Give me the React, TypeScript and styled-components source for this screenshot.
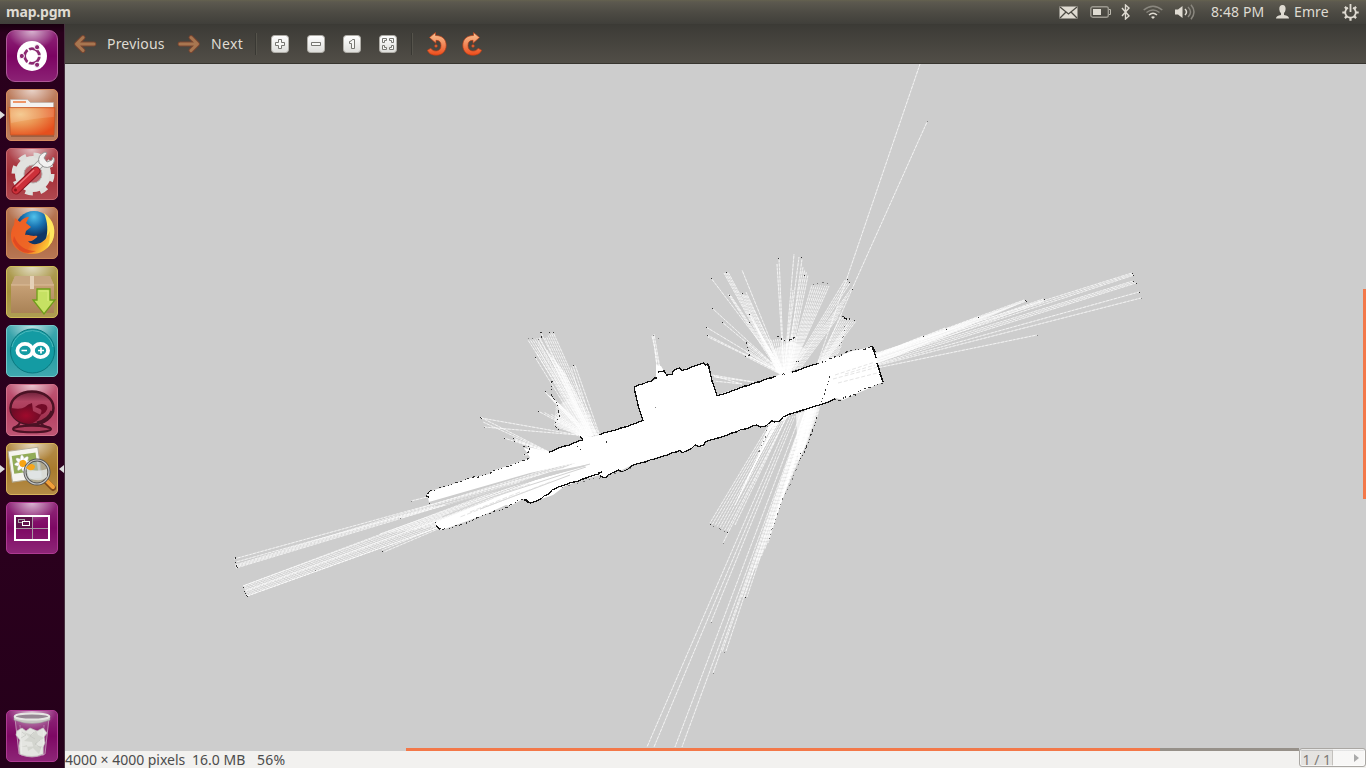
import React from "react";
import styled, { createGlobalStyle } from "styled-components";

const GlobalStyle = createGlobalStyle`
  * { box-sizing: border-box; }
  body { margin: 0; overflow: hidden; background: #cdcdcd; }
  body, button { font-family: "Noto Sans", "Open Sans", sans-serif; }
`;

const Desktop = styled.div`
  width: 1366px;
  height: 768px;
  display: flex;
  flex-direction: column;
`;

const TopPanel = styled.header`
  height: 24px;
  flex: none;
  display: flex;
  align-items: center;
  padding: 0 7px 0 6px;
  color: #dfdbd2;
  background: linear-gradient(#65624f 0, #5c594f 2px, #4c4a43 55%, #403f3a 100%);
`;

const WindowTitle = styled.h1`
  margin: 0;
  flex: 1;
  font-size: 14px;
  font-weight: 700;
  line-height: 24px;
  letter-spacing: -0.2px;
`;

const Indicator = styled.span<{ $gap: number }>`
  display: flex;
  margin-left: ${(p) => p.$gap}px;
`;

const PanelText = styled.span<{ $gap: number; $width: number; $spacing: number }>`
  width: ${(p) => p.$width}px;
  margin-left: ${(p) => p.$gap}px;
  font-size: 14px;
  line-height: 24px;
  letter-spacing: ${(p) => p.$spacing}px;
  white-space: nowrap;
`;

const Workspace = styled.div`
  flex: 1;
  min-height: 0;
  display: flex;
`;

const Launcher = styled.nav`
  width: 65px;
  flex: none;
  display: flex;
  flex-direction: column;
  align-items: center;
  gap: 7px;
  padding: 6px 1px 6px 0;
  border-right: 1px solid #47303f;
  background: linear-gradient(#18000f 0, #29001c 9px, #2c001e 60%, #25001a 100%);
`;

const Tile = styled.div<{ $color: string; $edge: string; $last?: boolean; $round?: number }>`
  position: relative;
  width: 52px;
  height: 52px;
  flex: none;
  margin-top: ${(p) => (p.$last ? "auto" : "0")};
  border-radius: ${(p) => p.$round ?? 5}px;
  border: 1px solid ${(p) => p.$edge};
  background: radial-gradient(ellipse 24px 19px at 50% 0, rgba(255, 255, 255, 0.65), rgba(255, 255, 255, 0)),
    linear-gradient(rgba(255, 255, 255, 0.14), rgba(255, 255, 255, 0) 50%, rgba(255, 255, 255, 0.12)), ${(p) => p.$color};
  svg { display: block; margin: -1px; }
`;

const Pip = styled.i<{ $right?: boolean }>`
  position: absolute;
  top: 21px;
  ${(p) => (p.$right ? "right: -7px;" : "left: -7px;")}
  border: solid transparent;
  border-width: 4px 0;
  ${(p) => (p.$right ? "border-right: 5px solid #ddd;" : "border-left: 5px solid #ddd;")}
`;

const Viewer = styled.main`
  flex: 1;
  min-width: 0;
  display: flex;
  flex-direction: column;
`;

const Toolbar = styled.div`
  height: 40px;
  flex: none;
  display: flex;
  align-items: center;
  padding: 0 0 1px 8px;
  color: #dfdbd2;
  border-top: 1px solid #3b3a35;
  border-bottom: 1px solid #37352f;
  background: linear-gradient(#3c3b36, #514e47);
`;

const ToolButton = styled.button<{ $width: number; $spacing?: number }>`
  width: ${(p) => p.$width}px;
  height: 36px;
  padding: 0;
  border: 0;
  display: flex;
  align-items: center;
  gap: 10px;
  background: none;
  color: inherit;
  font-size: 14px;
  letter-spacing: ${(p) => p.$spacing ?? 0}px;
  svg { flex: none; }
`;

const Divider = styled.span<{ $after: number }>`
  width: 2px;
  height: 22px;
  margin-right: ${(p) => p.$after}px;
  background: #393833;
  border-right: 1px solid #55534b;
`;

const Canvas = styled.section`
  position: relative;
  height: 687px;
  flex: none;
  background: #cdcdcd;
  svg { display: block; }
`;

const VerticalThumb = styled.div`
  position: absolute;
  right: 0;
  top: 225px;
  width: 3px;
  height: 210px;
  background: #f37849;
`;

const HorizontalBar = styled.div`
  position: absolute;
  left: 341px;
  bottom: 0;
  width: 893px;
  height: 3px;
  background: linear-gradient(90deg, #f37849 754px, #969089 754px);
`;

const StatusBar = styled.footer`
  position: relative;
  flex: 1;
  display: flex;
  color: #4c4c4c;
  background: #f2f1ef;
  font-size: 14px;
  line-height: 17px;
  white-space: pre;
`;

const StatusText = styled.span<{ $width: number; $spacing: number }>`
  width: ${(p) => p.$width}px;
  letter-spacing: ${(p) => p.$spacing}px;
`;

const PageCount = styled.span`
  position: absolute;
  right: 35px;
  bottom: 0;
  color: #77746f;
`;

const Stepper = styled.div`
  position: absolute;
  top: -3px;
  right: 0;
  width: 67px;
  height: 19px;
  display: flex;
  align-items: center;
  justify-content: flex-end;
  padding-right: 6px;
  border: 1px solid #aaa7a3;
  border-radius: 3px;
  background: linear-gradient(90deg, rgba(160, 155, 150, 0.16) 32px, #c4c1bd 32px, #c4c1bd 33px, rgba(255, 255, 255, 0.45) 33px);
  box-shadow: inset 0 0 0 1px rgba(255, 255, 255, 0.6);
`;

type Point = [number, number];

const toPoints = (list: Point[]) => list.map((p) => p.join(",")).join(" ");

/* Rays swept evenly from one edge of a scan sector to the other. */
const sweep = (a: Point, b: Point, from: Point, to: Point, count: number) =>
  Array.from({ length: count }, (_, i) => {
    const t = count === 1 ? 0 : i / (count - 1);
    const mix = (p: Point, q: Point) => `${(p[0] + (q[0] - p[0]) * t).toFixed(1)} ${(p[1] + (q[1] - p[1]) * t).toFixed(1)}`;
    return `M${mix(from, to)}L${mix(a, b)}`;
  }).join("");

const fan = (origin: Point, ends: Point[]) => ends.map((e) => `M${origin.join(" ")}L${e.join(" ")}`).join("");

/* Breaks a straight wall into the small steps of an occupancy grid. */
const roughen = (line: Point[], amount: number): Point[] => {
  const out: Point[] = [];
  line.forEach((p, i) => {
    out.push(p);
    const q = line[i + 1];
    if (!q) return;
    const steps = Math.floor(Math.hypot(q[0] - p[0], q[1] - p[1]) / 4);
    for (let s = 1; s < steps; s++) {
      const t = s / steps;
      const x = p[0] + (q[0] - p[0]) * t;
      const y = p[1] + (q[1] - p[1]) * t;
      out.push([x, y + Math.sin(x * 12.9 + y * 4.1) * amount]);
    }
  });
  return out;
};

const floor: Point[] = [
  [427, 494], [431, 491], [450, 485], [470, 478], [489, 474], [492, 471], [510, 465], [530, 458], [531, 452],
  [527, 447], [533, 448], [549, 452], [583, 440], [578, 434], [592, 437], [599, 435], [643, 420], [638, 404],
  [634, 390], [635, 386], [655, 380], [657, 374], [660, 374], [667, 375], [672, 374], [673, 370], [675, 369],
  [680, 368], [682, 370], [703, 363], [708, 366], [717, 395], [776, 376], [783, 373], [792, 372], [817, 364],
  [829, 358], [839, 356], [852, 351], [862, 349], [872, 346], [876, 358], [883, 382], [872, 387], [858, 393],
  [843, 400], [835, 398], [820, 405], [790, 415], [783, 421], [775, 420], [770, 424], [760, 427], [757, 425],
  [705, 442], [703, 447], [697, 445], [693, 447], [683, 452], [678, 451], [632, 465], [620, 471], [617, 470],
  [605, 478], [600, 475], [585, 479], [565, 486], [553, 495], [530, 503], [523, 499], [510, 506], [506, 505],
  [484, 515], [470, 520], [442, 530], [436, 527], [436, 522], [490, 500], [540, 478], [575, 463], [530, 473],
  [429, 502],
];

const walls: Point[][] = [
  [[549, 452], [565, 446], [583, 440], [580, 436]],
  [[599, 435], [621, 428], [643, 420.500], [638, 405], [634.500, 390], [634.500, 387], [647, 382], [652, 381], [654, 378], [657, 378]],
  [[666, 375], [672, 374.500], [673, 371], [676, 369], [680, 368], [682, 370.500], [692, 367], [704, 363], [705.500, 365], [708, 364], [712, 381], [717, 395.500], [740, 388], [776, 376]],
  [[792, 372], [804, 368], [817, 364]],
  [[870, 347], [872, 346], [876, 358]],
  [[877, 363], [879, 369], [883, 382]],
  [[835, 399], [820, 405], [790, 414], [783, 417], [780, 421], [774, 422], [772, 420.500], [768, 424], [766, 426], [760, 427], [757, 425], [732, 433], [705, 442], [704, 445], [699, 446.500], [695, 445], [691, 449], [684, 452], [682, 453], [680, 450.500], [655, 459], [632, 465.500], [628, 469], [622, 472], [619, 470], [612, 473], [605, 478], [600, 476]],
  [[602, 471], [599, 474], [589, 477], [583, 479], [565, 485], [552, 490], [549, 494], [544, 496], [541, 499], [530, 503], [527, 500], [524, 500]],
];

const brokenWalls: Point[][] = [
  [[427, 494], [431, 491], [450, 485], [470, 478], [490, 474], [492, 471], [530, 458]],
  [[817, 364], [829, 359], [840, 356], [852, 350], [862, 350], [872, 346]],
  [[883, 383], [872, 387], [859, 391], [857, 395], [844, 397], [841, 401], [835, 399]],
  [[523, 499], [510, 505], [508, 507], [484, 515], [460, 525], [442, 530], [437, 527], [435, 522]],
  [[830, 376], [824, 395], [819, 406]],
  [[817, 417], [812, 432], [807, 446], [800, 460]],
  [[542, 338], [541, 332]],
  [[552, 381], [551, 394], [556, 402], [560, 416], [554, 425], [559, 430]],
  [[842, 316], [846, 319], [853, 319], [855, 321]],
  [[746, 342], [750, 355], [745, 357]],
  [[777, 336], [786, 341], [795, 337]],
  [[523, 447], [528, 446], [531, 451], [524, 455]],
  [[235, 557], [237, 567]],
];

const sparseEdges: Point[][] = [
  [[800, 460], [790, 485], [782, 500], [768, 542]],
  [[768, 426], [765, 439], [758, 454]],
  [[710, 524], [718, 528], [727, 532]],
  [[845, 326], [844, 334], [839, 348]],
  [[813, 285], [822, 282], [827, 282], [829, 286]],
  [[528, 338], [539, 339]],
  [[558, 488], [600, 478], [632, 468]],
];

const rays = [
  sweep([647, 747], [654, 747], [790, 417], [793, 416], 2),
  sweep([675, 747], [682, 747], [801, 413], [805, 412], 2),
  fan([795, 416], [[711, 622]]),
  fan([806, 410], [[713, 673], [722, 652], [726, 651]]),
  fan([786, 418], [[723, 543], [735, 525]]),
  sweep([710, 523], [727, 531], [770, 423], [786, 418], 8),
  sweep([758, 455], [768, 428], [770, 423], [778, 421], 12),
  sweep([735, 505], [756, 460], [776, 420], [780, 420], 9),
  sweep([742, 597], [747, 597], [806, 410], [809, 410], 3),
  sweep([752, 575], [768, 543], [806, 410], [810, 409], 6),
  sweep([768, 540], [784, 494], [808, 409], [812, 408], 10),
  sweep([784, 494], [803, 450], [809, 408], [815, 407], 13),
  sweep([803, 450], [817, 417], [811, 408], [820, 405], 9),
  "M817 365L847 278L920 64M820 363L852 289L927 122",
  fan([784, 374], [
    [711, 278], [712, 308], [722, 322], [706, 327], [707, 335], [708, 337], [742, 270], [777, 264],
    [779, 258], [794, 254], [793, 290], [746, 292],
  ]),
  sweep([724, 273], [728, 272], [779, 373], [782, 374], 4),
  sweep([728, 294], [731, 296], [780, 374], [783, 374], 3),
  sweep([741, 293], [746, 295], [780, 373], [785, 373], 4),
  sweep([745, 356], [748, 343], [780, 374], [784, 374], 7),
  sweep([750, 315], [768, 347], [778, 373], [785, 373], 8),
  sweep([769, 340], [797, 337], [780, 373], [790, 373], 14),
  sweep([799, 257], [802, 259], [784, 373], [787, 373], 2),
  sweep([803, 267], [808, 275], [785, 372], [788, 372], 4),
  sweep([812, 285], [829, 286], [786, 373], [791, 371], 9),
  sweep([845, 280], [850, 283], [790, 371], [794, 370], 4),
  sweep([851, 289], [838, 317], [793, 369], [800, 369], 6),
  sweep([841, 317], [856, 321], [816, 366], [825, 362], 9),
  sweep([848, 324], [840, 350], [820, 363], [835, 357], 8),
  sweep([528, 340], [539, 338], [588, 434], [594, 437], 6),
  sweep([535, 357], [541, 333], [583, 435], [593, 436], 6),
  sweep([545, 338], [553, 332], [589, 434], [599, 435], 6),
  sweep([547, 350], [564, 372], [588, 435], [598, 435], 9),
  sweep([571, 367], [575, 365], [592, 436], [600, 436], 3),
  sweep([545, 392], [558, 403], [585, 435], [593, 436], 9),
  sweep([538, 411], [558, 416], [581, 434], [591, 437], 4),
  sweep([554, 426], [556, 405], [580, 435], [592, 437], 13),
  fan([578, 435], [[481, 418], [484, 427]]),
  fan([551, 453], [[480, 417], [483, 422], [504, 438], [513, 438], [515, 440], [516, 441], [524, 449], [523, 455]]),
  fan([661, 374], [[652, 336], [654, 334]]),
  fan([658, 374], [[653, 335], [655, 350]]),
  fan([754, 382], [[712, 375], [714, 377]]),
  fan([742, 384], [[714, 381], [714, 376]]),
  sweep([234, 559], [236, 562], [560, 469], [575, 468], 2),
  sweep([235, 565], [236, 568], [575, 461], [585, 463], 4),
  sweep([243, 586], [247, 596], [548, 474], [562, 483], 8),
  sweep([243, 586], [247, 596], [520, 482], [562, 483], 3),
  fan([520, 494], [[382, 550], [384, 552]]),
  fan([500, 479], [[411, 501]]),
  fan([535, 479], [[400, 518]]),
  sweep([436, 522], [440, 530], [560, 478], [540, 490], 9),
  sweep([380, 534], [440, 526], [560, 470], [540, 490], 8),
  sweep([1132, 273], [1134, 275], [835, 366], [838, 372], 3),
  sweep([1133, 281], [1136, 283], [832, 374], [836, 377], 3),
  fan([833, 377], [[1139, 292], [1141, 298], [1037, 335]]),
  sweep([1024, 300], [1026, 301], [846, 365], [850, 367], 3),
  sweep([1043, 299], [1044, 301], [845, 369], [848, 373], 3),
  fan([850, 366], [[923, 336], [945, 328], [978, 317], [960, 326]]),
].join("");

const hitPoints: Point[] = [
  [711, 278], [726, 272], [712, 308], [722, 322], [706, 327], [707, 335], [749, 314], [749, 322], [729, 295], [742, 293],
  [778, 258], [801, 257], [804, 275], [847, 279], [849, 282], [852, 289], [1132, 273], [1133, 275],
  [1133, 281], [1136, 283], [1139, 292], [1025, 300], [1026, 301], [1044, 299],
  [923, 336], [978, 317], [946, 329], [710, 524], [727, 532], [745, 597],
  [480, 417], [481, 418], [504, 438], [513, 438], [514, 441], [573, 365], [540, 332], [549, 332], [553, 332],
  [535, 357], [545, 391], [538, 411], [235, 557], [236, 566], [237, 567],
  [243, 587], [244, 591], [245, 593], [246, 595], [247, 596], [382, 551],
  [783, 373], [784, 374], [782, 374], [796, 361], [798, 361], [580, 449], [606, 441], [606, 442], [577, 446],
  [429, 503], [426, 495], [439, 529], [440, 528], [800, 453], [812, 431], [806, 445],
];

const faintPoints: Point[] = [
  [927, 121], [1141, 298], [1037, 335], [723, 543], [713, 673], [724, 652], [484, 427], [528, 338], [653, 335],
  [658, 338], [411, 501], [400, 518], [315, 570], [655, 407], [711, 622],
];

const ScanMap = () => (
  <svg width="1301" height="687" viewBox="65 64 1301 687">
    <path d={rays} stroke="#fff" strokeWidth="0.8" strokeOpacity="0.5" fill="none" />
    <path d={rays} stroke="#fff" strokeWidth="0.85" strokeOpacity="0.7" strokeDasharray="2 1.6 3 1.4" fill="none" />
    <polygon points="559,405 572,397 598,435 580,437 556,425" fill="#fff" opacity=".4" />
    <polygon points="551,368 562,368 590,433 565,412" fill="#fff" opacity=".2" />
    <polygon points="773,350 792,341 806,349 789,373 779,373" fill="#fff" opacity=".5" />
    <polygon points="796,414 818,407 807,443 798,462" fill="#fff" opacity=".7" />
    <polygon points="850,363 912,341 946,329 1026,301 900,355 845,376" fill="#fff" opacity=".7" />
    <polygon points="524,448 532,450 551,452 531,459" fill="#fff" />
    <polygon points="656,365 661,366 667,376 656,381" fill="#fff" />
    <polygon points={toPoints(floor)} fill="#fff" />
    <path d="M590 464L445 505M585 466L435 506M586 467L490 498L442 517M570 475L480 509" stroke="#cdcdcd" strokeWidth="0.9" fill="none" />
    <path d="M550 482L460 517M530 484L450 512M520 492L470 512" stroke="#ddd" strokeWidth=".8" strokeDasharray="5 2" fill="none" />
    <path d="M590 464L470 499L550 472Z" fill="#d0d0d0" />
    <path d="M835 375L875 362M833 379L878 367M838 383L881 372M845 374L875 365" stroke="#ddd" strokeWidth=".8" strokeDasharray="4 2" fill="none" />
    <path d="M792 416L760 490M789 417L757 485M794 417L776 458" stroke="#cdcdcd" strokeWidth=".9" />
    <g fill="none" stroke="#111" strokeLinejoin="bevel" shapeRendering="crispEdges">
      {walls.map((w, i) => (
        <polyline key={i} points={toPoints(roughen(w, 0.5))} strokeWidth="1.3" />
      ))}
      {brokenWalls.map((w, i) => (
        <polyline key={i} points={toPoints(roughen(w, 0.8))} stroke="#333" strokeWidth="1.1" strokeDasharray="2 3 1 2 1 4 3 2" />
      ))}
      {sparseEdges.map((w, i) => (
        <polyline key={i} points={toPoints(roughen(w, 0.7))} stroke="#777" strokeWidth="1" strokeDasharray="1 3 1 5 2 4" />
      ))}
    </g>
    <path d="M427 494l4-4M426 496l3 1M525 499l3 3 3 1M598 473l4-1M436 526l4 3M873 347l2 5M880 374l3 8M658 372l6-1 2 3M710 368l-3-4M844 318l3 1" stroke="#111" strokeWidth="1.4" fill="none" shapeRendering="crispEdges" />
    <g fill="#333" shapeRendering="crispEdges">
      {hitPoints.map(([x, y], i) => (
        <rect key={i} x={x} y={y} width="1" height="1" />
      ))}
    </g>
    <g fill="#888" shapeRendering="crispEdges">
      {faintPoints.map(([x, y], i) => (
        <rect key={i} x={x} y={y} width="1" height="1" />
      ))}
    </g>
  </svg>
);

const UbuntuArt = () => (
  <svg width="52" height="52">
    <circle cx="26" cy="26" r="15" fill="#fff" />
    <circle cx="26" cy="26" r="7.4" fill="none" stroke="#8c2a72" strokeWidth="2.8" />
    <path d="M26 26L37 26M26 26L20.5 16.5M26 26L20.5 35.5" stroke="#fff" strokeWidth="1.6" />
    <circle cx="26" cy="26" r="5.3" fill="#fff" />
    <g fill="#8c2a72" stroke="#fff" strokeWidth="1">
      <circle cx="15.8" cy="26" r="2.6" />
      <circle cx="31.1" cy="17.2" r="2.6" />
      <circle cx="31.1" cy="34.8" r="2.6" />
    </g>
  </svg>
);

const FilesArt = () => (
  <svg width="52" height="52">
    <defs>
      <radialGradient id="folder" cx=".25" cy=".25" r="1">
        <stop offset="0" stopColor="#f3c382" /><stop offset=".4" stopColor="#eb9351" /><stop offset=".85" stopColor="#e64f1d" />
      </radialGradient>
    </defs>
    <path d="M4.500 10.500h17l3 3h23v8h-43z" fill="#f4f2f0" stroke="#b5aca6" strokeWidth=".6" />
    <path d="M7 12h13v2H7z" fill="#ee9668" />
    <rect x="5" y="44" width="43" height="4" fill="#6e3a21" opacity=".4" />
    <path d="M3 18.500h46l-1 27.500H4.500z" fill="url(#folder)" stroke="#c85726" strokeWidth=".8" />
    <path d="M4.500 19.500h43.500l-.3 8.500Q30 29 5 34z" fill="#fff" opacity=".14" />
  </svg>
);

const SettingsArt = () => (
  <svg width="52" height="52">
    <circle cx="27" cy="26" r="13.500" fill="none" stroke="#e2e2df" strokeWidth="9" />
    <circle cx="27" cy="26" r="19" fill="none" stroke="#dededb" strokeWidth="5" strokeDasharray="7.460 7.460" />
    <circle cx="27" cy="26" r="9" fill="#bd5f65" stroke="#b4b2b0" />
    <path d="M28 22L38 12" stroke="#8e8e8e" strokeWidth="8" />
    <path d="M28 22L38 12" stroke="#ededec" strokeWidth="6.500" />
    <path d="M33 15q-2-8 6-11l2 1-3 5 3 4 5-2 1-3q2 1 1 5-3 7-10 5z" fill="#f2f2f1" stroke="#909090" strokeWidth=".9" />
    <path d="M30 23L10 42" stroke="#8c1520" strokeWidth="9" strokeLinecap="round" />
    <path d="M30 23L10 42" stroke="#cc3039" strokeWidth="7" strokeLinecap="round" />
    <path d="M28 22L10 39" stroke="#ef7378" strokeWidth="1.500" />
    <circle cx="9.500" cy="42" r="1.500" fill="#8b151d" />
  </svg>
);

const FirefoxArt = () => (
  <svg width="52" height="52">
    <defs>
      <radialGradient id="globe" cx=".5" cy=".15"><stop offset="0" stopColor="#52c2eb" /><stop offset=".55" stopColor="#1872b1" /><stop offset="1" stopColor="#103666" /></radialGradient>
      <linearGradient id="fox" x1="0" y1="0" x2="1" y2=".5"><stop offset="0" stopColor="#ee5b25" /><stop offset=".65" stopColor="#ee6825" /><stop offset="1" stopColor="#ffcc35" /></linearGradient>
    </defs>
    <circle cx="28" cy="23" r="19" fill="url(#globe)" />
    <path d="M40 8c7 6 10 15 7 24-5 14-20 18-31 13C5 41 2 28 8 18l1-7 5 4q4-5 9-5l-3 6 5 4-5 4-1 4c3-1 6 1 9 1 4-1 4 1 2 2-3 2-4 4-8 3 3 4 9 4 14 1 9-5 7-17 4-27z" fill="url(#fox)" />
    <path d="M38 6c10 7 13 18 8 29l-5 6c4-8 2-12 3-17l-4 8c2-7 2-17-2-26z" fill="#ffe65f" />
    <path d="M8 29q6 15 22 15-15 7-23-10z" fill="#da3c20" opacity=".65" />
  </svg>
);

const PackageArt = () => (
  <svg width="52" height="52">
    <defs><linearGradient id="box" x1="0" y1="0" x2="0" y2="1"><stop offset="0" stopColor="#d0aa80" /><stop offset="1" stopColor="#a98256" /></linearGradient></defs>
    <path d="M9 10h35l4 10v27H5V20z" fill="url(#box)" />
    <path d="M9 10h35l4 9H5z" fill="#c7a681" /><path d="M5 19h43" stroke="#dcbd98" />
    <path d="M24 10h4v13h-4z" fill="#e5d1b7" />
    <path d="M31 23h13v11h5L38 48 27 34h4z" fill="#c6e163" stroke="#6f9d1a" strokeWidth="1.300" />
    <path d="M33 25h9v10" fill="none" stroke="#dced80" />
  </svg>
);

const ArduinoArt = () => (
  <svg width="52" height="52">
    <circle cx="26.500" cy="26" r="22" fill="#149ba3" stroke="#08777e" />
    <path d="M6 22A21 21 0 0 1 47 22" fill="none" stroke="#4db8bb" />
    <g fill="none" stroke="#fff" strokeWidth="3.800">
      <ellipse cx="19" cy="25.500" rx="7.600" ry="6.600" />
      <ellipse cx="34.500" cy="25.500" rx="7.600" ry="6.600" />
    </g>
    <path d="M15.500 25.500h5.500M32 25.500h6M35 22.500v6" stroke="#fff" strokeWidth="1.700" />
  </svg>
);

const OrbArt = () => (
  <svg width="52" height="52">
    <defs>
      <linearGradient id="orb" x1="0" y1="0" x2="0" y2="1"><stop offset="0" stopColor="#6c2038" /><stop offset=".3" stopColor="#b24563" /><stop offset="1" stopColor="#9c2b49" /></linearGradient>
      <radialGradient id="core" cx=".5" cy=".6"><stop offset="0" stopColor="#a00a2c" /><stop offset="1" stopColor="#6e0b26" /></radialGradient>
    </defs>
    <ellipse cx="26" cy="45" rx="19" ry="3.300" fill="#a93b59" stroke="#4b1224" strokeWidth="2" />
    <path d="M14 38q-1 4-7 6M35 39q2 4 10 5" stroke="#4b1224" strokeWidth="2" fill="none" />
    <ellipse cx="26" cy="24" rx="21.500" ry="16.500" fill="url(#orb)" stroke="#4b1224" strokeWidth="2.500" />
    <path d="M5 24q10 2 14-1 3-3 7-4l1 8 8 4q-4 8-12 9Q5 38 5 24z" fill="url(#core)" />
    <path d="M29 23q5-5 11-2 4 4-3 9l-3 1q3-5 0-6-2-1-5-2z" fill="#720b27" />
    <path d="M46 27q-3 9-15 12" fill="none" stroke="#4b1224" strokeWidth="3" />
  </svg>
);

const ImageViewerArt = () => (
  <svg width="52" height="52">
    <g transform="rotate(-8 20 21)">
      <rect x="4" y="6" width="30" height="31" fill="#f5f4ef" stroke="#b3ab95" />
      <rect x="7" y="11" width="24" height="18" fill="#92ac57" />
      {[0, 45, 90, 135].map((a) => <ellipse key={a} cx="17" cy="20" rx="8.500" ry="2.500" fill="#fff" stroke="#bbb" strokeWidth=".4" transform={`rotate(${a} 17 20)`} />)}
      <circle cx="17" cy="20" r="3.500" fill="#f8a414" />
    </g>
    <path d="M40 38l7 7" stroke="#7e4919" strokeWidth="6" strokeLinecap="round" /><path d="M41 38l6 6" stroke="#f1a03a" strokeWidth="4" strokeLinecap="round" />
    <circle cx="31" cy="29" r="12" fill="#b2b9b3" fillOpacity=".7" stroke="#555" strokeWidth="3" />
    <circle cx="31" cy="29" r="12" fill="none" stroke="#c8c8c6" strokeWidth="1.200" />
    <path d="M20 25q10 5 21 1v8q-7 6-18 1z" fill="#e8ecee" opacity=".75" /><path d="M20 25q5-7 9-2 0 5-6 4z" fill="#f5a51c" />
  </svg>
);

const WorkspacesArt = () => (
  <svg width="52" height="52">
    <path d="M10 15h16v12H10z" fill="#5c1149" />
    <path d="M26.500 15v22M9 26.500h34" stroke="#a797a3" />
    <rect x="9" y="14" width="34" height="24" fill="none" stroke="#fff" strokeWidth="2" />
    <rect x="12.500" y="17.500" width="6" height="3" fill="none" stroke="#aaa" />
    <rect x="16.500" y="19.500" width="7" height="4" fill="#63134e" stroke="#fff" />
  </svg>
);

const TrashArt = () => (
  <svg width="52" height="52">
    <path d="M9 8l4 36q13 6 26 0l4-36z" fill="#ddd" fillOpacity=".18" stroke="#bd8ab0" />
    <g fill="#e4e5e1" stroke="#c3c5c0" strokeWidth=".7">
      <path d="M11 21l5-3 4 3 4-3 7 3 6-3 4 5-3 4 1 6-2 4v7q-11 5-23 0l-1-8 1-6-4-5z" />
      <path d="M18 22l5 5-5 4 8 1 2 7 4-8 7-3-7-3-2-5-4 5zM15 37l6-2 1 6 5-3 6 6 3-8" fill="#d3d5cf" stroke="none" />
      <path d="M16 22l4 3-5 3M28 22l-4 4 5 3M34 30l-5 4 6 4" fill="none" />
    </g>
    <path d="M14 15l2 31M38 15l-1 31" stroke="#fff" opacity=".3" />
    <path d="M8 6v4q18 7 36 0V6q-16 6-36 0z" fill="#c6c6c2" stroke="#999" strokeWidth=".5" />
    <ellipse cx="26" cy="6.500" rx="17.200" ry="3" fill="#968793" stroke="#e6e6e3" strokeWidth="2" />
  </svg>
);

const NavArrow = ({ next }: { next?: boolean }) => (
  <svg width="24" height="20" viewBox="0 0 24 20">
    <g transform={next ? "translate(24 0) scale(-1 1)" : undefined} fill="none" strokeLinecap="round" strokeLinejoin="round">
      <path d="M10 3.500L3.500 10l6.500 6.500M4 10h17" stroke="#7a4630" strokeWidth="4.800" />
      <path d="M10 3.500L3.500 10l6.500 6.500M4 10h17" stroke="#a87650" strokeWidth="3" />
    </g>
  </svg>
);

const ZoomGlyph = ({ kind }: { kind: "in" | "out" | "one" | "fit" }) => (
  <svg width="18" height="18">
    <defs><linearGradient id={`key-${kind}`} x1="0" y1="0" x2="0" y2="1"><stop offset="0" stopColor="#fff" /><stop offset="1" stopColor="#ddddda" /></linearGradient></defs>
    <rect x=".5" y=".5" width="17" height="17" rx="3" fill={`url(#key-${kind})`} stroke="#b0aea8" />
    <g fill="#f7f7f5" stroke="#777772">
      {kind === "in" && <path d="M7.500 4.500h3v3h3v3h-3v3h-3v-3h-3v-3h3z" />}
      {kind === "out" && <path d="M4.500 7.500h9v3h-9z" />}
      {kind === "one" && <path d="M9.500 4.500h2v9h-3v-5h-2v-2q2 0 3-2z" />}
      {kind === "fit" && <path d="M3.500 3.500h4v2h-2v2h-2zM10.500 3.500h4v4h-2v-2h-2zM3.500 10.500h2v2h2v2h-4zM12.500 10.500h2v4h-4v-2h2z" />}
    </g>
  </svg>
);

const RotateGlyph = ({ right }: { right?: boolean }) => (
  <svg width="20" height="24" viewBox="0 0 20 24">
    <defs><linearGradient id={right ? "turn-r" : "turn-l"} x1="0" y1="0" x2="0" y2="1"><stop offset="0" stopColor="#f9c393" /><stop offset=".5" stopColor="#f28b5c" /><stop offset="1" stopColor="#ef4b19" /></linearGradient></defs>
    <g transform={right ? "translate(20 0) scale(-1 1)" : undefined} stroke="#b83e17" strokeWidth=".7">
      <path d="M2.500 5.500L8.500.5v3c7 0 10.700 4 10.700 9.800 0 6-4.200 10-9.700 10-5 0-8-2-9.200-5l3.500-2c1.500 2 3 2.700 5.200 2.700 3.300 0 5-2.300 5-5.500 0-3.500-1.700-5.200-5-5.200v3z" fill={`url(#${right ? "turn-r" : "turn-l"})`} />
      <circle cx="9" cy="14" r="1.300" fill="#f37441" />
    </g>
  </svg>
);

const MailIcon = () => (
  <svg width="19" height="13"><path d="M.5.500h18v12H.5z" fill="#dfdbd2" /><path d="M1 1l8.500 7L18 1M1 12l6-6M18 12l-6-6" fill="none" stroke="#4c4a43" strokeWidth="1.300" /></svg>
);
const BatteryIcon = () => (
  <svg width="21" height="12"><rect x=".8" y=".8" width="17.500" height="10.400" rx="2" fill="none" stroke="#9b988f" strokeWidth="1.400" /><path d="M19 3.500h1.500v5H19" fill="none" stroke="#bbb8ae" /><path d="M3 3h8v6H3z" fill="#dfdbd2" /></svg>
);
const BluetoothIcon = () => (
  <svg width="10" height="16"><path d="M1 4l7 8-3.500 3V1L8 4l-7 8" fill="none" stroke="#dfdbd2" strokeWidth="1.400" /></svg>
);
const WifiIcon = () => (
  <svg width="20" height="14" fill="none" strokeWidth="1.500"><path d="M.7 5Q10-2.500 19.300 5M3.500 7.500q6.500-5 13 0" stroke="#8a877f" /><path d="M6 10q4-3.500 8 0" stroke="#dfdbd2" /><path d="M8 12q2-1.500 4 0l-2 2z" fill="#dfdbd2" /></svg>
);
const VolumeIcon = () => (
  <svg width="20" height="16"><path d="M0 5.500h3L7.500 2v12L3 10.500H0z" fill="#dfdbd2" /><path d="M10 5q3 3 0 6" fill="none" stroke="#dfdbd2" strokeWidth="1.500" /><path d="M13 3q5 5 0 10M16 .800q6 7.200 0 14.400" fill="none" stroke="#8a877f" strokeWidth="1.500" /></svg>
);
const UserIcon = () => (
  <svg width="13" height="14"><path d="M6.500 0C9 0 10 2 9.500 5q-.3 2-1.500 3v2q5 .5 5 3.500H0Q0 10.500 5 10V8Q3.500 7 3.300 4.500 3 0 6.500 0z" fill="#dfdbd2" /></svg>
);
const GearIcon = () => (
  <svg width="17" height="17" fill="none" stroke="#dfdbd2"><path d="M6 3.700a5.300 5.300 0 1 0 5 0M8.500 0v8" strokeWidth="1.800" /><path d="M2.900 2.900l2 2M14.100 2.900l-2 2M.3 8.500h2.900M13.800 8.500h2.900M2.900 14.100l2-2M14.100 14.100l-2-2M8.500 13.800v2.900" strokeWidth="2.200" /></svg>
);

export default function App() {
  return (
    <>
      <GlobalStyle />
      <Desktop>
        <TopPanel>
          <WindowTitle>map.pgm</WindowTitle>
          <Indicator $gap={0}><MailIcon /></Indicator>
          <Indicator $gap={12}><BatteryIcon /></Indicator>
          <Indicator $gap={10}><BluetoothIcon /></Indicator>
          <Indicator $gap={12}><WifiIcon /></Indicator>
          <Indicator $gap={12}><VolumeIcon /></Indicator>
          <PanelText $gap={16} $width={53} $spacing={0.1}>8:48 PM</PanelText>
          <Indicator $gap={12}><UserIcon /></Indicator>
          <PanelText $gap={5} $width={35} $spacing={0.1}>Emre</PanelText>
          <Indicator $gap={13}><GearIcon /></Indicator>
        </TopPanel>
        <Workspace>
          <Launcher>
            <Tile $color="#7c0362" $edge="#ae5898" $round={9}><UbuntuArt /></Tile>
            <Tile $color="#b46c49" $edge="#d68d60"><FilesArt /><Pip /></Tile>
            <Tile $color="#a52e37" $edge="#c86a70"><SettingsArt /></Tile>
            <Tile $color="#ad643d" $edge="#cd895a"><FirefoxArt /></Tile>
            <Tile $color="#a4903c" $edge="#d0bd58"><PackageArt /></Tile>
            <Tile $color="#259ba3" $edge="#74c7ca"><ArduinoArt /></Tile>
            <Tile $color="#b63e61" $edge="#d0708a"><OrbArt /></Tile>
            <Tile $color="#a97b2d" $edge="#d7b35b"><ImageViewerArt /><Pip /><Pip $right /></Tile>
            <Tile $color="#7e0864" $edge="#ae3a92"><WorkspacesArt /></Tile>
            <Tile $color="#7e0864" $edge="#ae3a92" $last><TrashArt /></Tile>
          </Launcher>
          <Viewer>
            <Toolbar>
              <ToolButton $width={104} $spacing={0.2}><NavArrow />Previous</ToolButton>
              <ToolButton $width={78} $spacing={0.4}><NavArrow next />Next</ToolButton>
              <Divider $after={14} />
              <ToolButton $width={36}><ZoomGlyph kind="in" /></ToolButton>
              <ToolButton $width={36}><ZoomGlyph kind="out" /></ToolButton>
              <ToolButton $width={36}><ZoomGlyph kind="one" /></ToolButton>
              <ToolButton $width={32}><ZoomGlyph kind="fit" /></ToolButton>
              <Divider $after={14} />
              <ToolButton $width={35}><RotateGlyph /></ToolButton>
              <ToolButton $width={35}><RotateGlyph right /></ToolButton>
            </Toolbar>
            <Canvas>
              <ScanMap />
              <VerticalThumb />
              <HorizontalBar />
            </Canvas>
            <StatusBar>
              <StatusText $width={127} $spacing={-0.02}>4000 × 4000 pixels</StatusText>
              <StatusText $width={65} $spacing={0.02}>16.0 MB</StatusText>
              <StatusText $width={40} $spacing={0.2}>56%</StatusText>
              <PageCount>1 / 1</PageCount>
              <Stepper><svg width="5" height="8"><path d="M0 0l5 4-5 4z" fill="#aaa" /></svg></Stepper>
            </StatusBar>
          </Viewer>
        </Workspace>
      </Desktop>
    </>
  );
}
